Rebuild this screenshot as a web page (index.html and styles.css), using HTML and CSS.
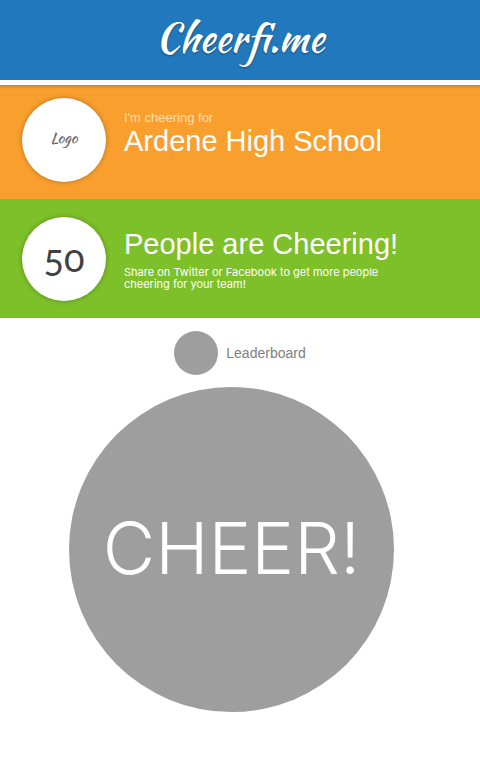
FILE: index.html
```html
<!DOCTYPE html>
<html lang="en">
<head>
<meta charset="utf-8">
<meta name="viewport" content="width=device-width, initial-scale=1">
<title>Cheerfi.me</title>
<link rel="stylesheet" href="styles.css">
</head>
<body>
<header class="site-header">
  <h1 class="brand">Cheerfi.me</h1>
</header>
<main>
  <section class="band band-team">
    <div class="disc disc-logo">Logo</div>
    <div class="band-text">
      <p class="eyebrow">I'm cheering for</p>
      <h2 class="title">Ardene High School</h2>
    </div>
  </section>
  <section class="band band-count">
    <div class="disc disc-number">50</div>
    <div class="band-text">
      <h2 class="title">People are Cheering!</h2>
      <p class="note">Share on Twitter or Facebook to get more people cheering for your team!</p>
    </div>
  </section>
  <section class="actions">
    <a class="leaderboard" href="#leaderboard"><span class="dot"></span>Leaderboard</a>
    <button class="cheer" type="button">CHEER!</button>
  </section>
</main>
</body>
</html>
```
FILE: styles.css
```css
* {
  box-sizing: border-box;
}

body {
  margin: 0;
  background: #fff;
  font-family: "Liberation Sans", Arial, sans-serif;
}

h1, h2, p {
  margin: 0;
  font-weight: 400;
}

.site-header {
  display: flex;
  justify-content: center;
  height: 80px;
  margin-bottom: 5px;
  padding-top: 10px;
  background: #2178bc;
}

.brand {
  color: #fff;
  font: 400 39px/56px "Kaushan Script", Lato, sans-serif;
  text-shadow: 0 1px 2px rgba(0, 0, 0, 0.4);
}

.band {
  display: flex;
  gap: 18px;
  padding: 18px 22px 17px;
  color: #fff;
}

.band-team {
  padding-top: 13px;
  background: #f99f2e linear-gradient(rgba(0, 0, 0, 0.18), transparent) top / 100% 4px no-repeat;
}

.band-count {
  background: #7dc029;
}

.disc {
  display: flex;
  flex: none;
  align-items: center;
  justify-content: center;
  width: 84px;
  height: 84px;
  padding-bottom: 4px;
  border-radius: 50%;
  background: #fff;
  box-shadow: 0 0 5px rgba(0, 0, 0, 0.3);
}

.disc-logo {
  color: #6d6d6d;
  font: 400 15px/20px "Kaushan Script", Lato, sans-serif;
}

.disc-number {
  color: #414042;
  font: 400 38px/44px Lato, sans-serif;
  font-variant-numeric: oldstyle-nums;
}

.band-text {
  padding-top: 12px;
}

.eyebrow {
  color: #fddcb6;
  font-size: 13px;
  line-height: 16px;
}

.title {
  font-size: 29px;
  line-height: 30px;
}

.note {
  max-width: 264px;
  margin-top: 7px;
  font-family: Inter, "Liberation Sans", sans-serif;
  font-size: 11px;
  line-height: 12px;
}

.actions {
  display: flex;
  flex-direction: column;
  align-items: center;
  gap: 12px;
  padding: 13px 0 68px;
}

.leaderboard {
  display: flex;
  align-items: center;
  gap: 8px;
  color: #808080;
  font-size: 14px;
  text-decoration: none;
}

.dot {
  width: 44px;
  height: 44px;
  border-radius: 50%;
  background: #9e9e9e;
}

.cheer {
  width: 325px;
  height: 325px;
  margin-right: 17px;
  padding: 0 0 4px;
  border: 0;
  border-radius: 50%;
  background: #9e9e9e;
  color: #fff;
  font: 300 72px/80px Inter, "Liberation Sans", sans-serif;
  cursor: pointer;
}
```
